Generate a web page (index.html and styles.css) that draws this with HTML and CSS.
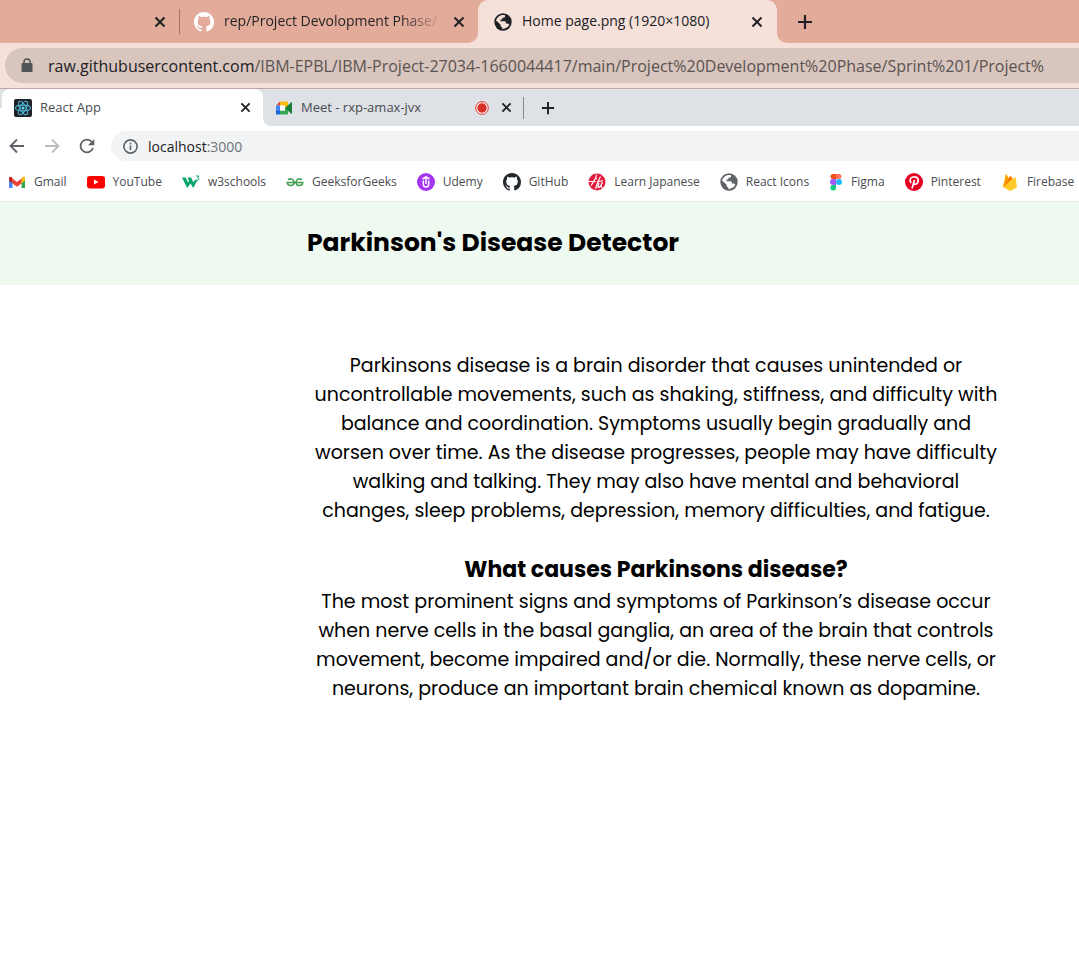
FILE: index.html
```
<!DOCTYPE html>
<html lang="en">
<head>
<meta charset="utf-8">
<meta name="viewport" content="width=device-width, initial-scale=1">
<title>Parkinson's Disease Detector</title>
<link rel="stylesheet" href="styles.css">
</head>
<body>
<svg class="sprite" aria-hidden="true">
  <symbol id="close" viewBox="0 0 12 12"><path d="M1.5 1.5l9 9M10.5 1.5l-9 9" fill="none" stroke="currentColor" stroke-width="2"/></symbol>
  <symbol id="plus" viewBox="0 0 16 16"><path d="M8 1v14M1 8h14" fill="none" stroke="currentColor" stroke-width="2.2"/></symbol>
  <symbol id="github" viewBox="0 0 16 16"><path fill="currentColor" d="M8 0C3.58 0 0 3.58 0 8c0 3.54 2.29 6.53 5.47 7.59.4.07.55-.17.55-.38 0-.19-.01-.82-.01-1.49-2.01.37-2.53-.49-2.69-.94-.09-.23-.48-.94-.82-1.13-.28-.15-.68-.52-.01-.53.63-.01 1.08.58 1.23.82.72 1.21 1.87.87 2.33.66.07-.52.28-.87.51-1.07-1.78-.2-3.64-.89-3.64-3.95 0-.87.31-1.59.82-2.15-.08-.2-.36-1.02.08-2.12 0 0 .67-.21 2.2.82.64-.18 1.32-.27 2-.27s1.36.09 2 .27c1.53-1.04 2.2-.82 2.2-.82.44 1.1.16 1.92.08 2.12.51.56.82 1.27.82 2.15 0 3.07-1.87 3.75-3.65 3.95.29.25.54.73.54 1.48 0 1.07-.01 1.93-.01 2.2 0 .21.15.46.55.38A8.01 8.01 0 0016 8c0-4.42-3.58-8-8-8z"/></symbol>
  <symbol id="globe" viewBox="0 0 18 18"><circle cx="9" cy="9" r="8.7" fill="currentColor"/><path class="land" d="M11 2.3V3.400Q11 4.800 9.500 4.800H8.300V6.500H6.500V8.200H10.700Q11.800 8.200 11.800 9.300V10.500H13.300Q14.500 10.500 15.300 11.800C13.900 14.700 11.400 16 8.200 15.900V14.300Q6.500 14.200 6.500 12.500V11.600L2.100 7.500C3.200 3.700 7 1.400 11 2.300Z"/></symbol>
</svg>

<header class="outer">
  <nav class="tabs" aria-label="Window tabs">
    <div class="tab tab-first"><button class="icon-button" aria-label="Close first tab"><svg class="x"><use href="#close"/></svg></button></div>
    <div class="tab tab-rep"><svg class="icon-large white"><use href="#github"/></svg><span class="tab-label faded">rep/Project Devolopment Phase/</span><button class="icon-button" aria-label="Close repository tab"><svg class="x"><use href="#close"/></svg></button></div>
    <div class="tab tab-home"><svg class="icon globe"><use href="#globe"/></svg><span class="tab-label">Home page.png (1920×1080)</span><button class="icon-button" aria-label="Close home page tab"><svg class="x"><use href="#close"/></svg></button></div>
    <button class="icon-button add" aria-label="New tab"><svg class="plus"><use href="#plus"/></svg></button>
  </nav>
  <div class="address-row">
    <div class="address"><svg class="lock" viewBox="0 0 12 15"><path d="M3 6V4a3 3 0 016 0v2" fill="none" stroke="#515457" stroke-width="1.500"/><rect x=".5" y="5" width="11" height="9" rx="1" fill="#515457"/></svg><span class="url"><b>raw.githubusercontent.com</b>/IBM-EPBL/IBM-Project-27034-1660044417/main/Project%20Development%20Phase/Sprint%201/Project%</span></div>
  </div>
</header>

<section class="inner" aria-label="Browser">
  <nav class="inner-tabs" aria-label="Tabs">
    <div class="inner-tab selected">
      <svg class="icon" viewBox="0 0 18 18"><rect width="18" height="18" rx="2" fill="#20232a"/><g fill="none" stroke="#4cb8d4" stroke-width="1.100"><ellipse cx="9" cy="9" rx="7.500" ry="2.900"/><ellipse cx="9" cy="9" rx="7.500" ry="2.900" transform="rotate(60 9 9)"/><ellipse cx="9" cy="9" rx="7.500" ry="2.900" transform="rotate(120 9 9)"/></g><circle cx="9" cy="9" r="1.500" fill="#61dafb"/></svg>
      <span class="tab-label">React App</span><button class="icon-button" aria-label="Close React App"><svg class="x small"><use href="#close"/></svg></button>
    </div>
    <div class="inner-tab meet">
      <svg class="icon" viewBox="0 0 18 18"><path fill="#fbbc04" d="M5 2.500h7a1 1 0 011 1V8l-3 1V6.500H5z"/><path fill="#ea4335" d="M5 2.500v4H1z"/><path fill="#4285f4" d="M1 6.500h4V12H1z"/><path fill="#1967d2" d="M1 11.500h4v4H2a1 1 0 01-1-1z"/><path fill="#34a853" d="M5 11.500h5V9l3-1v6.500a1 1 0 01-1 1H5z"/><path fill="#fff" d="M5 6.500h5v5H5z"/><path fill="#188038" d="M10 9l6-5.500q1-.5 1 .5v10q0 1-1 .5z"/></svg>
      <span class="tab-label">Meet - rxp-amax-jvx</span><svg class="record" viewBox="0 0 14 14"><circle cx="7" cy="7" r="6.300" fill="#fff" stroke="#d93025"/><circle cx="7" cy="7" r="4.700" fill="#d93025"/></svg><button class="icon-button" aria-label="Close Meet"><svg class="x small"><use href="#close"/></svg></button>
    </div>
    <button class="icon-button inner-add" aria-label="New browser tab"><svg class="plus small-plus"><use href="#plus"/></svg></button>
  </nav>
  <div class="toolbar">
    <button class="icon-button" aria-label="Back"><svg class="nav-icon" viewBox="0 0 16 16"><path d="M15 8H2M8 1.500L1.500 8 8 14.500"/></svg></button>
    <button class="icon-button pale" aria-label="Forward"><svg class="nav-icon" viewBox="0 0 16 16"><path d="M1 8h13M8 1.500L14.500 8 8 14.500"/></svg></button>
    <button class="icon-button" aria-label="Reload"><svg class="nav-icon" viewBox="0 0 16 16"><path d="M13 4A6.400 6.400 0 1014 10"/><path d="M15.300 1v6.300H9z" class="solid"/></svg></button>
    <div class="localhost"><svg class="info" viewBox="0 0 15 15"><circle cx="7.500" cy="7.500" r="6.600"/><path d="M7.500 6.500V11M7.500 3.800v1.600"/></svg><span class="url"><b>localhost</b>:3000</span></div>
  </div>
  <nav class="bookmarks" aria-label="Bookmarks">
    <a href="#"><svg class="icon" viewBox="0 0 18 18"><path d="M1 5v9.500q0 .5.500.5H4.500V8z" fill="#4285f4"/><path d="M13.500 8v7h3q.5 0 .5-.5V5z" fill="#34a853"/><path d="M13.500 5q1.500-2 3-1 .5.500.5 1.500V7.500l-3.500 3z" fill="#fbbc04"/><path d="M4.500 5.500L9 9l4.500-3.500v5L9 13.800 4.500 10.500z" fill="#ea4335"/><path d="M4.500 5Q3 3 1.500 4 1 4.500 1 5.500v2l3.500 3z" fill="#c5221f"/></svg>Gmail</a>
    <a href="#"><svg class="icon" viewBox="0 0 18 18"><rect y="3" width="18" height="12.500" rx="3" fill="#f00"/><path d="M7 6.500v5l4.500-2.500z" fill="#fff"/></svg>YouTube</a>
    <a href="#"><svg class="icon" viewBox="0 0 18 18"><path d="M0 4.500h3.700l2.300 5 1-1.500-1.500-3.500h3.600l2.300 5 1.600-2.500h2.500L11.300 15 8.500 10.500 5.200 15z" fill="#04a46b"/><path d="M14 3h3l-1.500 1.800Q17 5 16.800 6.500 16 8 14 7" fill="none" stroke="#04a46b"/></svg>w3schools</a>
    <a href="#"><svg class="icon" viewBox="0 0 18 18"><g fill="none" stroke="#439c54" stroke-width="1.600"><path d="M2 6.500Q7 4.500 8 9q0 3.500-3.300 3.500T1.300 9.500H16.700q0 3-3.400 3T10 9q1-4.500 6-2.500"/></g></svg>GeeksforGeeks</a>
    <a href="#"><svg class="icon" viewBox="0 0 18 18"><circle cx="9" cy="9" r="9" fill="#a435f0"/><path d="M5.500 6L9 3.800 12.500 6M6.300 7.500V11q0 3 2.700 3t2.700-3V7.500M9 5v6" fill="none" stroke="#fff" stroke-width="1.500"/></svg>Udemy</a>
    <a href="#"><svg class="icon dark"><use href="#github"/></svg>GitHub</a>
    <a href="#"><svg class="icon" viewBox="0 0 18 18"><circle cx="9" cy="9" r="8.500" fill="#e51b3e"/><path d="M0 8.500h7.500M8.500 1.500Q8 6 3 12.500M7 5l2 1M7.500 16Q9 10 12.500 3.500M9 9l6-1.500M11 10Q9 15 11 14.500 13 13 14.500 9M14 10q-2 5 1 5" fill="none" stroke="#fff" stroke-width="1.200"/></svg>Learn Japanese</a>
    <a href="#"><svg class="icon gray"><use href="#globe"/></svg>React Icons</a>
    <a href="#"><svg class="icon figma" viewBox="0 0 12 18"><path d="M3 1h3v5H3a2.500 2.500 0 010-5" fill="#f24e1e"/><path d="M6 1h3a2.500 2.500 0 010 5H6z" fill="#ff7262"/><path d="M6 6v6H3a3 3 0 010-6" fill="#a259ff"/><circle cx="9" cy="9" r="3" fill="#1abcfe"/><path d="M3 12h3v2.500A2.800 2.800 0 113 12" fill="#0acf83"/></svg>Figma</a>
    <a href="#"><svg class="icon" viewBox="0 0 18 18"><circle cx="9" cy="9" r="9" fill="#e60023"/><path d="M6 10Q3.500 5 8 4q5-.8 5.300 3.500Q12.500 12 9 11l-.6-1M9.500 7L7 15.500" fill="none" stroke="#fff" stroke-width="1.700"/></svg>Pinterest</a>
    <a href="#"><svg class="icon" viewBox="0 0 18 18"><path d="M2 14L5 1l3 4 1.500-2.500L11.500 6 14.500 4 16 14.500 9 18z" fill="#ffca28"/><path d="M2 14L5 1l3.500 5.500z" fill="#ffa000"/><path d="M2 14L9.500 2.500l2 3.500z" fill="#f57c00"/></svg>Firebase</a>
  </nav>
</section>
<div class="site-header"><h1>Parkinson's Disease Detector</h1></div>
<main>
  <p>Parkinsons disease is a brain disorder that causes unintended or uncontrollable movements, such as shaking, stiffness, and difficulty with balance and coordination. Symptoms usually begin gradually and worsen over time. As the disease progresses, people may have difficulty walking and talking. They may also have mental and behavioral changes, sleep problems, depression, memory difficulties, and fatigue.</p>
  <h2>What causes Parkinsons disease?</h2>
  <p>The most prominent signs and symptoms of Parkinson’s disease occur when nerve cells in the basal ganglia, an area of the brain that controls movement, become impaired and/or die. Normally, these nerve cells, or neurons, produce an important brain chemical known as dopamine.</p>
</main>
</body>
</html>
```

FILE: styles.css
```
* { box-sizing: border-box; }
body { margin: 0; background: #fff; color: #000; font-family: Poppins, Inter, sans-serif; overflow-x: hidden; }
svg { display: block; flex: none; }
.sprite { position: absolute; width: 0; height: 0; }
.outer, .inner { font-family: "Segoe UI", "Open Sans", sans-serif; }
.icon { width: 18px; height: 18px; }
.icon-large { width: 20px; height: 20px; }
.white { color: #fff; }
.dark { color: #24292f; }
.globe { color: #202124; --land: #f5e0da; }
.gray { color: #5f6368; --land: #fff; }
.land { fill: var(--land); }
.icon-button { display: flex; flex: none; align-items: center; justify-content: center; padding: 0; border: 0; background: none; color: #202124; }
.x { width: 12px; height: 12px; }
.x.small { width: 11px; height: 11px; }
.plus { width: 16px; height: 16px; }
.small-plus { width: 14px; height: 14px; }
.tab-label { flex: 1; min-width: 0; padding-bottom: 2px; white-space: nowrap; }
.tabs { display: flex; height: 43px; background: linear-gradient(#e3ab99 50%, #f5e0da 50%); font-size: 14px; color: #202124; }
.tab { display: flex; align-items: center; background: #e3ab99; }
.tab-first { width: 180px; justify-content: flex-end; padding-right: 14px; background: linear-gradient(#a37568, #a37568) right center / 1px 25px no-repeat #e3ab99; }
.tab-rep { width: 298px; gap: 10px; padding: 0 13px 0 14px; border-radius: 0 0 10px 0; }
.faded { color: transparent; background: linear-gradient(to right, #202124 80%, #e3ab99); -webkit-background-clip: text; background-clip: text; }
.tab-home { width: 299px; gap: 10px; padding: 0 14px 0 16px; background: #f5e0da; border-radius: 10px 10px 0 0; }
.add { flex: 1; justify-content: flex-start; padding-left: 20px; background: #e3ab99; border-radius: 0 0 0 10px; }
.address-row { height: 46px; padding: 5px 0 0 5px; background: #f5e0da; border-bottom: 1px solid #bda9a3; overflow: hidden; }
.address { display: flex; align-items: center; gap: 15px; height: 35px; padding-left: 16px; border-radius: 18px 0 0 18px; background: #d7c5be; color: #5b5351; font-size: 16px; }
.lock { width: 12px; height: 15px; }
.url { white-space: nowrap; }
.url b { color: #202124; font-weight: 400; }
.inner { color: #494c50; font-size: 12px; }
.inner-tabs { display: flex; height: 37px; background: linear-gradient(#dee1e6 50%, #fff 50%); font-size: 13px; }
.inner-tab { display: flex; align-items: center; gap: 8px; }
.selected { width: 261px; margin-left: 2px; padding: 0 12px; background: #fff; border-radius: 8px 8px 0 0; }
.meet { width: 261px; gap: 8px; padding: 0 12px; border-radius: 0 0 0 8px; background: linear-gradient(#85898d, #85898d) right center / 1px 22px no-repeat #dee1e6; }
.record { width: 14px; height: 14px; margin-right: 4px; }
.inner-add { flex: 1; justify-content: flex-start; padding-left: 17px; background: #dee1e6; }
.toolbar { display: flex; align-items: center; gap: 19px; height: 40px; padding-left: 9px; }
.nav-icon { width: 16px; height: 16px; fill: none; stroke: #5f6368; stroke-width: 1.8; }
.nav-icon .solid { fill: #5f6368; stroke: none; }
.pale .nav-icon { stroke: #babcbe; }
.localhost { display: flex; flex: 1; align-items: center; gap: 10px; height: 30px; margin-left: -3px; padding-left: 12px; border-radius: 15px 0 0 15px; background: #f1f3f4; color: #6f7377; font-size: 14px; }
.info { width: 15px; height: 15px; fill: none; stroke: #5f6368; stroke-width: 1.6; }
.bookmarks { display: flex; align-items: center; gap: 20px; height: 36px; padding: 0 0 4px 8px; border-bottom: 1px solid #e7e9e9; white-space: nowrap; }
.bookmarks a { display: flex; align-items: center; gap: 8px; color: inherit; text-decoration: none; }
.figma { width: 14px; }
.site-header { height: 83px; padding: 26px 0 0 307px; background: #eef9f0; }
h1 { margin: 0; font-size: 25px; font-weight: 700; line-height: 30px; white-space: nowrap; }
main { max-width: 1003px; padding: 66px 0 0 309px; text-align: center; }
p { margin: 0; font-size: 19px; font-weight: 400; line-height: 29px; }
h2 { margin: 28px 0 0; font-size: 22px; font-weight: 700; line-height: 34px; }
```
